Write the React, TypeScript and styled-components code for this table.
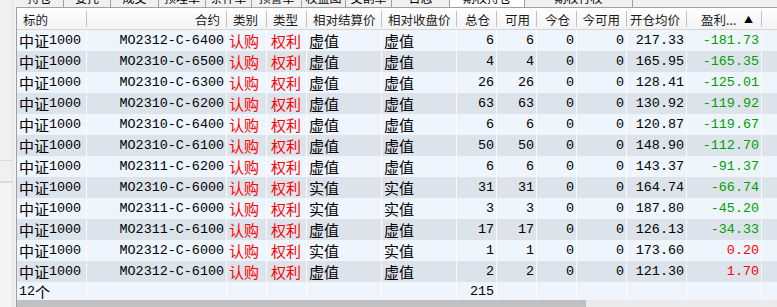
import React from "react";
import styled, { createGlobalStyle } from "styled-components";

const GlobalStyle = createGlobalStyle`
  html, body {
    margin: 0;
    padding: 0;
    background: #f0f0f0;
    overflow: hidden;
  }
  body {
    font-family: "Noto Sans CJK SC", sans-serif;
  }
`;

interface IRow {
  code: string;
  kind: string;
  type: string;
  settle: string;
  close: string;
  total: number;
  avail: number;
  today: number;
  todayAvail: number;
  price: string;
  profit: string;
}

const rows: IRow[] = [
  { code: "MO2312-C-6400", kind: "认购", type: "权利", settle: "虚值", close: "虚值", total: 6, avail: 6, today: 0, todayAvail: 0, price: "217.33", profit: "-181.73" },
  { code: "MO2310-C-6500", kind: "认购", type: "权利", settle: "虚值", close: "虚值", total: 4, avail: 4, today: 0, todayAvail: 0, price: "165.95", profit: "-165.35" },
  { code: "MO2310-C-6300", kind: "认购", type: "权利", settle: "虚值", close: "虚值", total: 26, avail: 26, today: 0, todayAvail: 0, price: "128.41", profit: "-125.01" },
  { code: "MO2310-C-6200", kind: "认购", type: "权利", settle: "虚值", close: "虚值", total: 63, avail: 63, today: 0, todayAvail: 0, price: "130.92", profit: "-119.92" },
  { code: "MO2310-C-6400", kind: "认购", type: "权利", settle: "虚值", close: "虚值", total: 6, avail: 6, today: 0, todayAvail: 0, price: "120.87", profit: "-119.67" },
  { code: "MO2310-C-6100", kind: "认购", type: "权利", settle: "虚值", close: "虚值", total: 50, avail: 50, today: 0, todayAvail: 0, price: "148.90", profit: "-112.70" },
  { code: "MO2311-C-6200", kind: "认购", type: "权利", settle: "虚值", close: "虚值", total: 6, avail: 6, today: 0, todayAvail: 0, price: "143.37", profit: "-91.37" },
  { code: "MO2310-C-6000", kind: "认购", type: "权利", settle: "实值", close: "实值", total: 31, avail: 31, today: 0, todayAvail: 0, price: "164.74", profit: "-66.74" },
  { code: "MO2311-C-6000", kind: "认购", type: "权利", settle: "实值", close: "实值", total: 3, avail: 3, today: 0, todayAvail: 0, price: "187.80", profit: "-45.20" },
  { code: "MO2311-C-6100", kind: "认购", type: "权利", settle: "虚值", close: "虚值", total: 17, avail: 17, today: 0, todayAvail: 0, price: "126.13", profit: "-34.33" },
  { code: "MO2312-C-6000", kind: "认购", type: "权利", settle: "实值", close: "实值", total: 1, avail: 1, today: 0, todayAvail: 0, price: "173.60", profit: "0.20" },
  { code: "MO2312-C-6100", kind: "认购", type: "权利", settle: "虚值", close: "虚值", total: 2, avail: 2, today: 0, todayAvail: 0, price: "121.30", profit: "1.70" },
];

const tabs = ["持仓", "委托", "成交", "预埋单", "条件单", "预警单", "权益图", "交割单", "日志", "期权持仓", "期权行权"];
const tabWidths = [48, 47, 48, 47, 46, 50, 44, 46, 58, 75, 108];

const COLS = "70px 140px 40px 40px 75px 75px 40px 40px 40px 50px 60px 75px 40px";

const Page = styled.div`
  display: flex;
  width: 777px;
  height: 307px;
  overflow: hidden;
`;

const Side = styled.div`
  width: 16px;
  flex: none;
  display: flex;
  flex-direction: column;
`;

const SideBox = styled.div<{ $h?: number }>`
  height: ${p => (p.$h ? `${p.$h}px` : "auto")};
  flex: ${p => (p.$h ? "none" : "1")};
  border-right: 1px solid #e2e2e2;
  border-bottom: 1px solid #dadada;
  box-sizing: border-box;
  margin-right: 3px;
  &:last-child {
    border-top: 1px solid #dadada;
    border-bottom: 0;
    background: #f4f4f4;
  }
`;

const Main = styled.div`
  flex: 1;
  display: flex;
  flex-direction: column;
  min-width: 0;
`;

const TabStrip = styled.div`
  height: 7px;
  flex: none;
  display: flex;
  overflow: hidden;
  border-bottom: 1px solid #a0a0a0;
`;

const Tab = styled.div<{ $active?: boolean; $w: number }>`
  width: ${p => p.$w}px;
  flex: none;
  margin-top: -10px;
  height: 17px;
  box-sizing: border-box;
  border-right: 1px solid #a0a0a0;
  background: ${p => (p.$active ? "#ffffff" : "#f0f0f0")};
  font-size: 12px;
  line-height: 15px;
  text-align: center;
  color: #000;
`;

const Grid = styled.div`
  flex: 1;
  display: flex;
  flex-direction: column;
  border-left: 1px solid #a0a0a0;
  background: #eef5fd;
  overflow: hidden;
`;

const HeadRow = styled.div`
  display: grid;
  grid-template-columns: ${COLS};
  height: 22px;
  flex: none;
  background: linear-gradient(#ffffff, #f3f3f3);
  border-bottom: 1px solid #d5d5d5;
  box-sizing: border-box;
`;

const HeadCell = styled.div<{ $align?: string }>`
  position: relative;
  display: flex;
  align-items: center;
  justify-content: ${p => p.$align || "flex-start"};
  padding: 0 6px;
  font-size: 12.5px;
  color: #1a1a1a;
  white-space: nowrap;
  overflow: hidden;
  border-right: 1px solid #c2c2c2;
  margin: 3px 0 2px;
  &:first-child {
    padding-left: 6px;
  }
`;

const SortMark = styled.span`
  position: absolute;
  right: 8px;
  font-size: 9px;
  color: #000;
`;

const Row = styled.div<{ $alt?: boolean }>`
  display: grid;
  grid-template-columns: ${COLS};
  height: 21px;
  flex: none;
  background: ${p => (p.$alt ? "#dde3eb" : "#eef5fd")};
`;

const Cell = styled.div<{ $align?: string; $color?: string; $cn?: boolean }>`
  display: flex;
  align-items: center;
  justify-content: ${p => p.$align || "flex-start"};
  padding: 0 2px;
  font-family: ${p => (p.$cn ? '"Noto Sans CJK SC", sans-serif' : '"Liberation Mono", "Noto Sans CJK SC", monospace')};
  font-size: ${p => (p.$cn ? "15px" : "13.4px")};
  line-height: 21px;
  color: ${p => p.$color || "#000"};
  border-right: 1px solid rgba(255, 255, 255, 0.75);
  white-space: nowrap;
  overflow: hidden;
`;

const Cn = styled.span`
  font-family: "Noto Sans CJK SC", sans-serif;
  font-size: 15px;
`;

const FootRow = styled(Row)`
  height: 18px;
`;

const ScrollBar = styled.div`
  flex: none;
  height: 7px;
  margin-top: auto;
  background: #eaeaea;
  display: flex;
`;

const Thumb = styled.div`
  width: 569px;
  background: #c1c1c1;
`;

const RED = "#ff0000";
const GREEN = "#00a000";

export default function App() {
  return (
    <Page>
      <GlobalStyle />
      <Side>
        <SideBox $h={161} />
        <SideBox $h={21} />
        <SideBox />
      </Side>
      <Main>
        <TabStrip>
          {tabs.map((t, i) => (
            <Tab key={t} $w={tabWidths[i]} $active={t === "期权持仓"}>{t}</Tab>
          ))}
        </TabStrip>
        <Grid>
          <HeadRow>
            <HeadCell>标的</HeadCell>
            <HeadCell $align="flex-end">合约</HeadCell>
            <HeadCell>类别</HeadCell>
            <HeadCell>类型</HeadCell>
            <HeadCell>相对结算价</HeadCell>
            <HeadCell>相对收盘价</HeadCell>
            <HeadCell $align="flex-end">总仓</HeadCell>
            <HeadCell $align="flex-end">可用</HeadCell>
            <HeadCell $align="flex-end">今仓</HeadCell>
            <HeadCell $align="flex-end">今可用</HeadCell>
            <HeadCell $align="flex-end">开仓均价</HeadCell>
            <HeadCell style={{ paddingLeft: 14 }}>盈利...<SortMark>▲</SortMark></HeadCell>
            <HeadCell />
          </HeadRow>
          {rows.map((r, i) => {
            const loss = r.profit.startsWith("-");
            return (
              <Row key={"row-" + i} $alt={i % 2 === 1}>
                <Cell><Cn>中证</Cn>1000</Cell>
                <Cell $align="flex-end">{r.code}</Cell>
                <Cell $cn $color={RED}>{r.kind}</Cell>
                <Cell $cn $color={RED} style={{ paddingLeft: 4 }}>{r.type}</Cell>
                <Cell $cn>{r.settle}</Cell>
                <Cell $cn>{r.close}</Cell>
                <Cell $align="flex-end">{r.total}</Cell>
                <Cell $align="flex-end">{r.avail}</Cell>
                <Cell $align="flex-end">{r.today}</Cell>
                <Cell $align="flex-end">{r.todayAvail}</Cell>
                <Cell $align="flex-end">{r.price}</Cell>
                <Cell $align="flex-end" $color={loss ? GREEN : RED}>{r.profit}</Cell>
                <Cell />
              </Row>
            );
          })}
          <FootRow>
            <Cell>12<Cn>个</Cn></Cell>
            <Cell />
            <Cell />
            <Cell />
            <Cell />
            <Cell />
            <Cell $align="flex-end">215</Cell>
            <Cell />
            <Cell />
            <Cell />
            <Cell />
            <Cell />
            <Cell />
          </FootRow>
          <ScrollBar>
            <Thumb />
          </ScrollBar>
        </Grid>
      </Main>
    </Page>
  );
}
